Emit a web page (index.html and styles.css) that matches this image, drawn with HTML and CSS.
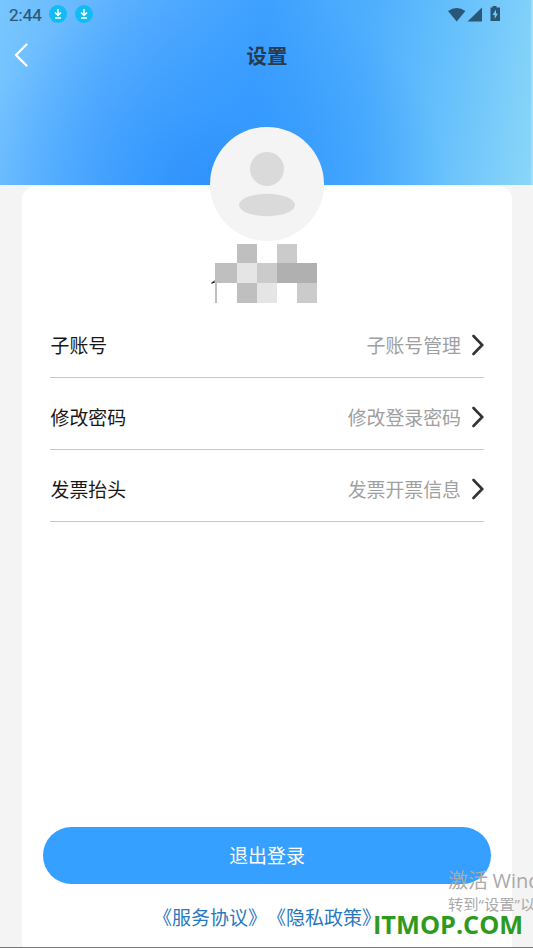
FILE: index.html
```
<!DOCTYPE html>
<html lang="zh-CN">
<head>
<meta charset="utf-8">
<title>设置</title>
<link rel="stylesheet" href="styles.css">
</head>
<body>
<div class="screen">
  <header class="hero">
    <div class="status">
      <span class="time">2:44</span>
      <svg class="dl" viewBox="0 0 18 18"><circle cx="9" cy="9" r="9" fill="#12bcf3"/><path d="M9 4v6M6 7.5l3 3 3-3M6 13h6" fill="none" stroke="#fff" stroke-width="1.5"/></svg>
      <svg class="dl" viewBox="0 0 18 18"><circle cx="9" cy="9" r="9" fill="#12bcf3"/><path d="M9 4v6M6 7.5l3 3 3-3M6 13h6" fill="none" stroke="#fff" stroke-width="1.5"/></svg>
      <svg class="signals" viewBox="0 0 54 18" fill="#285777"><path d="M0 5Q8.700-.9 17.400 5L8.700 15.500z"/><path d="M34 1.500v14H19.500z"/><path fill-rule="evenodd" d="M44.500 0h4v1.500h3.500v13.500h-9.500v-13.500h2zM48 3.500l-3.500 5.500h2.200v4l3.200-5.500h-1.900z"/></svg>
    </div>
    <div class="nav">
      <svg class="back" viewBox="0 0 14 24"><path d="M12.500 1.500L2 12l10.500 10.500" fill="none" stroke="#fff" stroke-width="2.300" stroke-linecap="round"/></svg>
      <h1>设置</h1>
    </div>
  </header>
  <main class="card">
    <svg class="avatar" viewBox="0 0 114 114"><circle cx="57" cy="57" r="57" fill="#f4f4f4"/><circle cx="57" cy="42" r="17" fill="#dadada"/><ellipse cx="57" cy="78" rx="28" ry="11.200" fill="#dadada"/></svg>
    <svg class="mosaic" viewBox="0 0 107 59" shape-rendering="crispEdges">
      <path d="M1.500 39.500l2.500-2v1.500" fill="none" stroke="#222" stroke-width="1.300" shape-rendering="auto"/>
      <path d="M27 0h20v19H27zM5 19h22v20H5zM27 39h20v20H27z" fill="#bfbfbf"/>
      <path d="M5 39h2v20H5z" fill="#bfbfbf"/>
      <path d="M67 0h20v19H67zM47 19h20v20H47zM87 39h20v20H87z" fill="#cbcbcb"/>
      <path d="M27 19h20v20H27zM47 39h20v20H47z" fill="#e5e5e5"/>
      <path d="M67 19h40v20H67z" fill="#b0b0b0"/>
    </svg>
    <div class="list">
      <div class="row"><span class="label">子账号</span><span class="value">子账号管理</span><svg class="chev" viewBox="0 0 12 22"><path d="M1.500 2L10.200 11 1.500 20" fill="none" stroke="#333" stroke-width="2.600" stroke-linecap="round"/></svg></div>
      <div class="row"><span class="label">修改密码</span><span class="value">修改登录密码</span><svg class="chev" viewBox="0 0 12 22"><path d="M1.500 2L10.200 11 1.500 20" fill="none" stroke="#333" stroke-width="2.600" stroke-linecap="round"/></svg></div>
      <div class="row"><span class="label">发票抬头</span><span class="value">发票开票信息</span><svg class="chev" viewBox="0 0 12 22"><path d="M1.500 2L10.200 11 1.500 20" fill="none" stroke="#333" stroke-width="2.600" stroke-linecap="round"/></svg></div>
    </div>
    <button class="logout">退出登录</button>
    <div class="links"><a>《服务协议》</a><a>《隐私政策》</a></div>
  </main>
  <div class="activate"><div class="act-title">激活 <span class="latin">Windows</span></div><div class="act-sub">转到<span class="latin">“</span>设置<span class="latin">”</span>以激活</div></div>
  <div class="brand">ITMOP.COM</div>
</div>
</body>
</html>
```
FILE: styles.css
```
* { box-sizing: border-box; }
body { margin: 0; font-family: "Noto Sans CJK SC", sans-serif; }
.screen {
  position: relative;
  width: 533px;
  height: 948px;
  overflow: hidden;
  background: #f4f4f4;
  border-bottom: 1px solid #777;
  display: flex;
  flex-direction: column;
}
.hero {
  flex: none;
  height: 185px;
  background:
    radial-gradient(ellipse 240px 230px at 210px 200px, #2e90fd 0%, rgba(46,148,254,.6) 40%, rgba(55,156,255,0) 100%),
    linear-gradient(98deg, #78c6fe 0%, #5eb2fe 22%, #40a2fe 48%, #50b0fd 68%, #69c2fb 84%, #8ad6f9 100%);
  border-right: 2px solid #a5defa;
}
.status { display: flex; align-items: center; height: 29px; padding: 0 29px 0 9px; }
.time { font: 400 17px/29px Roboto, sans-serif; color: #285777; -webkit-text-stroke: .2px #285777; width: 40px; padding-top: 2px; }
.dl { width: 18px; height: 18px; margin: -1px 8px 0 0; }
.signals { width: 54px; height: 18px; margin-left: auto; margin-top: 1px; }
.nav { display: flex; align-items: center; height: 52px; padding: 0 14px; }
.back { width: 14px; height: 24px; }
.nav h1 { flex: 1; margin: 0 11px 0 0; text-align: center; font-size: 20.500px; line-height: 52px; font-weight: 700; color: #263b50; }
.card {
  flex: 1;
  width: 490px;
  margin: 2px 0 0 22px;
  background: #fff;
  border-radius: 13px 13px 0 0;
  box-shadow: 0 -1px 0 #fafafa;
  display: flex;
  flex-direction: column;
  align-items: center;
}
.avatar { width: 114px; height: 114px; margin-top: -60px; flex: none; }
.mosaic { width: 107px; height: 59px; flex: none; margin: 3px 7px 0 0; }
.list { width: 434px; margin: 3px 0 0; }
.row { display: flex; align-items: center; height: 72px; padding-top: 6px; border-bottom: 1px solid #c8c8c8; font-size: 18.900px; color: #181818; }
.label { margin-left: .5px; }
.value { margin-left: auto; margin-right: 11px; color: #a0a0a0; }
.label, .value { padding-bottom: 1px; }
.chev { width: 12px; height: 22px; }
.logout { width: 448px; height: 57px; margin-top: auto; border: 0; border-radius: 29px; background: #35a0ff; color: #fff; font: 400 18.900px/55px "Noto Sans CJK SC", sans-serif; padding: 0 0 2px; }
.links { height: 63px; line-height: 65px; font-size: 19px; color: #2878bf; white-space: nowrap; text-spacing-trim: space-all; font-kerning: none; }
.activate { position: absolute; left: 448px; top: 866px; white-space: nowrap; color: #aaa; }
.act-title { font-size: 20px; line-height: 28px; }
.act-sub { font-size: 15.300px; line-height: 17px; }
.latin { font-family: "Open Sans", sans-serif; }
.brand { position: absolute; left: 373px; top: 909px; font: 700 25.300px/30px "Open Sans", sans-serif; color: #2f9a1e; }
```
